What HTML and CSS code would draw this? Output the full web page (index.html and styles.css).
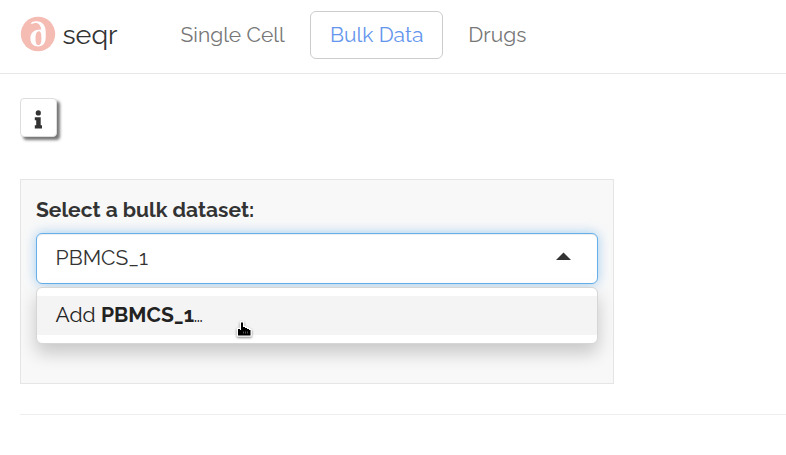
FILE: index.html
```html
<!DOCTYPE html>
<html lang="en">
<head>
<meta charset="utf-8">
<title>seqr</title>
<link rel="stylesheet" href="styles.css">
</head>
<body>
<header class="navbar">
  <a class="brand">
    <svg class="logo" width="36" height="36" viewBox="0 0 36 36">
      <circle cx="18" cy="18" r="17.2" fill="#f5bcb4"/>
      <path fill="#fff" fill-rule="evenodd" d="M10.8 7.5C11.5 5.9 13.5 5.2 16.5 5.3C22.5 5.5 25.7 9.5 25.7 16V21C25.7 27 23 30.5 18.3 30.5C13.3 30.5 10.4 27.3 10.4 22.5C10.4 17.6 13.2 14.3 18 13.8L21.2 13.6C20.8 9 18.2 6.6 15 7.1C13 7.4 12 8.4 10.8 7.5ZM18.6 15.2C16.2 15.7 15.5 18.3 15.5 22C15.5 26.8 16.2 29.1 18.5 29.1C20.8 29.1 21.4 26.5 21.4 22C21.4 17.8 20.9 15.2 18.6 15.2Z"/>
    </svg>
    <span class="brand-name">seqr</span>
  </a>
  <nav class="tabs">
    <a class="tab single">Single Cell</a>
    <a class="tab bulk active">Bulk Data</a>
    <a class="tab drugs">Drugs</a>
  </nav>
</header>
<main class="content">
  <button class="info" aria-label="Info">
    <svg width="9" height="19" viewBox="0 0 9 19" fill="#333"><circle cx="4.3" cy="2.9" r="2.6"/><path d="M.8 7.2H6.7V15.2H8V18.5H.8V15.2H2.2V10.2H.8Z"/></svg>
  </button>
  <section class="well">
    <label class="label">Select a bulk dataset:</label>
    <div class="select">
      <span class="value">PBMCS_1</span>
      <svg class="caret" width="15" height="8" viewBox="0 0 15 8"><path d="M0 8L7.5 .5L15 8Z" fill="#333"/></svg>
      <div class="menu">
        <div class="option"><span class="add">Add</span><strong class="name">PBMCS_1</strong><span class="dots">…</span></div>
      </div>
      <svg class="pointer" width="18" height="20" viewBox="0 0 18 20"><path d="M5 2.5H7V7H9V8H11V9H13V10H14.5V15.5H2V9H4V10H5Z" fill="#000" stroke="#fff" stroke-width="2.6" stroke-linejoin="round" paint-order="stroke"/><path d="M7.5 11.5V13.5M9.5 11.5V13.5M11.5 11.5V13.5" stroke="#777" stroke-width=".7"/></svg>
    </div>
  </section>
  <hr class="rule">
</main>
</body>
</html>
```
FILE: styles.css
```css
* { box-sizing: border-box; }
body {
  margin: 0;
  background: #fff;
  color: #333;
  font-family: Raleway, Lato, "Open Sans", sans-serif;
  font-size: 21px;
  line-height: 30px;
  overflow: hidden;
}
.navbar {
  display: flex;
  height: 74px;
  padding: 11px 20px 0;
  border-bottom: 1px solid #e7e7e7;
}
.brand { display: flex; width: 141px; height: 48px; align-items: center; }
.logo { flex: none; margin: -2px 6.5px 0 0; }
.brand-name { font-size: 27px; }
.tabs { display: flex; }
.tab {
  height: 48px;
  padding: 8px 0 0 18.6px;
  border: 1px solid transparent;
  border-radius: 6px;
  color: #777;
  white-space: nowrap;
}
.single { width: 149px; }
.bulk { width: 133px; padding-left: 19px; }
.drugs { width: 100px; margin-left: 6px; padding-left: 18.3px; }
.active { color: #6495ed; border-color: #ccc; }
.content { padding: 24px 0 0 20px; }
.info {
  display: flex;
  align-items: center;
  justify-content: center;
  width: 37px;
  height: 39px;
  padding: 3px 1px 0 0;
  border: 1px solid #ddd;
  border-radius: 4px;
  background: #fff;
  box-shadow: 3px 3px 3px #777;
}
.well {
  width: 594px;
  height: 205px;
  margin-top: 42px;
  padding: 15px;
  border: 1px solid #e5e5e5;
  background: #f8f8f8;
}
.label { display: block; height: 38px; font-weight: 700; }
.select {
  position: relative;
  display: flex;
  justify-content: space-between;
  align-items: center;
  width: 562px;
  height: 51px;
  padding: 0 26px 1px 18.6px;
  border: 1px solid #66afe9;
  border-radius: 6px;
  background: #fff;
  box-shadow: inset 0 1px 1px rgba(0,0,0,.075), 0 0 12px rgba(102,175,233,.6);
}
.caret { margin-top: -4px; }
.menu {
  position: absolute;
  top: 53px;
  left: -1px;
  width: 562px;
  height: 57px;
  padding: 8px 0;
  border: 1px solid #d6d6d6;
  border-radius: 6px;
  background: #fff;
  box-shadow: 0 9px 18px rgba(0,0,0,.2);
}
.option {
  display: flex;
  height: 39px;
  padding: 4px 0 0 18.6px;
  background: #f4f4f4;
  color: #222;
}
.add { width: 45.4px; }
.name { width: 92.6px; }
.pointer {
  position: absolute;
  left: 199px;
  top: 86px;
  filter: drop-shadow(0 1px 1px rgba(0,0,0,.5));
}
.rule { height: 1px; margin: 30px 0 0; border: 0; background: #eee; }
```
